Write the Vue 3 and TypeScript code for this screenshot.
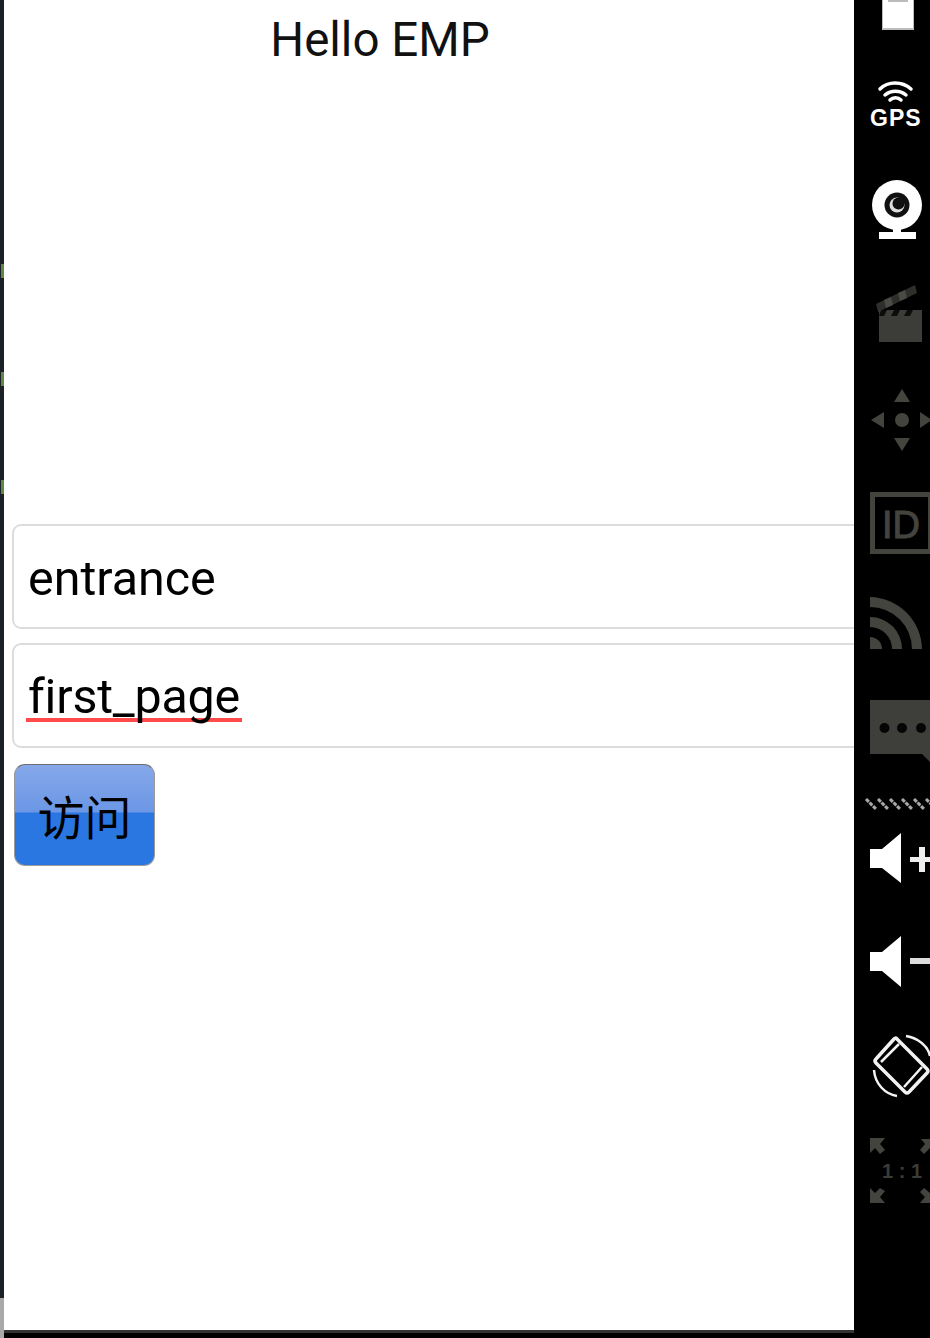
<script setup lang="ts">
import { ref } from 'vue'

const title = ref<string>('Hello EMP')
const moduleName = ref<string>('entrance')
const pageName = ref<string>('first_page')

// hatch strip between the grey tools and the volume keys
const hatches: number[] = [12, 24, 36, 48, 60, 72]
</script>

<template>
  <div class="emulator">
    <div class="edge">
      <i class="tick first"></i>
      <i class="tick"></i>
      <i class="tick"></i>
      <div class="edge-end"></div>
    </div>

    <div class="screen-col">
      <main class="screen">
        <h1 class="title">{{ title }}</h1>
        <div class="field first-field">{{ moduleName }}</div>
        <div class="field second-field"><span class="misspelled">{{ pageName }}</span></div>
        <button class="go" type="button">访问</button>
      </main>
      <div class="screen-bottom"></div>
    </div>

    <aside class="tools">
      <!-- battery -->
      <svg class="tool" width="76" height="30" viewBox="0 0 76 30">
        <rect x="28" y="0" width="32" height="30" fill="#bdbdbd" />
        <rect x="29" y="0" width="30" height="28" fill="#fff" />
        <rect x="34" y="0" width="20" height="2" fill="#bbb" />
      </svg>
      <!-- gps -->
      <svg class="tool gap-50" width="76" height="50" viewBox="0 0 76 50">
        <g fill="none" stroke="#fff" stroke-width="3.5" stroke-linecap="round">
          <path d="M26 9 C34 1 48 1 57 9" />
          <path d="M31 15 C37 10 46 10 52 15" />
          <path d="M36 20 C39 17 44 17 47 20" />
        </g>
        <text x="16" y="46" class="gps">GPS</text>
      </svg>
      <!-- camera -->
      <svg class="tool gap-49" width="76" height="60" viewBox="0 0 76 60">
        <circle cx="43" cy="26" r="25" fill="#fff" />
        <circle cx="43" cy="26" r="12.5" fill="#111" />
        <circle cx="43" cy="26" r="7.500" fill="#ddd" />
        <circle cx="44.500" cy="24.500" r="6" fill="#111" />
        <rect x="39" y="48" width="8" height="6" fill="#fff" />
        <rect x="25" y="53" width="37" height="7" fill="#fff" />
      </svg>
      <!-- clapper -->
      <svg class="tool gap-45" width="76" height="58" viewBox="0 0 76 58">
        <path d="M22 20 L61 1 L63 9 L24 28 Z" fill="#2e2e2b" />
        <path d="M30 16 L37 13 L39 21 L32 24 Z M44 9 L51 6 L53 14 L46 17 Z" fill="#4a4a46" />
        <rect x="25" y="26" width="43" height="32" fill="#3c3c38" />
        <path d="M27 26 L33 26 L30 32 L25 32 Z M40 26 L46 26 L43 32 L37 32 Z M53 26 L59 26 L56 32 L50 32 Z" fill="#0c0c0c" />
      </svg>
      <!-- dpad -->
      <svg class="tool gap-47" width="76" height="64" viewBox="0 0 76 64">
        <g fill="#44443f">
          <path d="M48 0 L56 13 L40 13 Z" />
          <path d="M48 62 L56 49 L40 49 Z" />
          <path d="M17 31 L30 23 L30 39 Z" />
          <path d="M66 23 L78 31 L66 39 Z" />
          <circle cx="48" cy="31" r="7" />
        </g>
      </svg>
      <!-- device id -->
      <svg class="tool gap-39" width="76" height="62" viewBox="0 0 76 62">
        <rect x="18.500" y="2.500" width="58" height="57" fill="none" stroke="#44443f" stroke-width="5" />
        <text x="28" y="46" class="id">ID</text>
      </svg>
      <!-- rss -->
      <svg class="tool gap-40" width="76" height="56" viewBox="0 0 76 56">
        <g fill="#44443f">
          <path d="M16 3 A53 53 0 0 1 68 55 L58 55 A42 42 0 0 0 16 13 Z" />
          <path d="M16 23 A32 32 0 0 1 48 55 L38 55 A22 22 0 0 0 16 33 Z" />
          <path d="M16 43 A12 12 0 0 1 28 55 L16 55 Z" />
        </g>
      </svg>
      <!-- sms -->
      <svg class="tool gap-50" width="76" height="62" viewBox="0 0 76 62">
        <path d="M16 0 H76 V62 L68 54 H16 Z" fill="#3e3e3a" />
        <circle cx="30.500" cy="28" r="5" fill="#050505" />
        <circle cx="48" cy="28" r="5" fill="#050505" />
        <circle cx="67" cy="28" r="5" fill="#050505" />
      </svg>
      <!-- hatch -->
      <svg class="tool gap-36" width="76" height="12" viewBox="0 0 76 12">
        <path v-for="x in hatches" :key="x" :d="`M${x} 1 L${x + 10} 11`" stroke="#a8a8a8" stroke-width="3" stroke-dasharray="4 1" />
      </svg>
      <!-- volume up -->
      <svg class="tool gap-23" width="76" height="52" viewBox="0 0 76 52">
        <path d="M16 16 H28 L47 0 V50 L28 35 H16 Z" fill="#fff" />
        <path d="M56 24 H76 V29 H56 Z M65 14 H71 V39 H65 Z" fill="#eee" />
      </svg>
      <!-- volume down -->
      <svg class="tool gap-51" width="76" height="52" viewBox="0 0 76 52">
        <path d="M16 16 H28 L47 0 V51 L28 35 H16 Z" fill="#fff" />
        <rect x="56" y="22" width="20" height="6" fill="#ddd" />
      </svg>
      <!-- rotate -->
      <svg class="tool gap-46" width="76" height="64" viewBox="0 0 76 64">
        <g fill="none" stroke="#f2f2f2">
          <path d="M43 5 L73 35 Q75 37 73 39 L55 58 Q53 60 51 58 L22 29 Q20 27 22 25 L40 5 Q42 3 43 5 Z" stroke-width="3.500" />
          <path d="M27 28 L45 10 M50 53 L68 33" stroke-width="2.500" />
          <path d="M52 2 C64 4 74 12 76 22" stroke-width="2.500" />
          <path d="M20 36 C21 50 31 60 43 62" stroke-width="2.500" />
        </g>
      </svg>
      <!-- one to one -->
      <svg class="tool gap-40" width="76" height="66" viewBox="0 0 76 66">
        <g fill="#44443f">
          <path d="M16 0 H31 L26 6 L31 12 L26 16 L21 10 L16 15 Z" />
          <path d="M76 1 H67 L71 6 L66 12 L70 16 L76 10 Z" />
          <path d="M16 65 H31 L26 59 L31 53 L26 50 L21 55 L16 50 Z" />
          <path d="M76 65 H66 L71 59 L66 54 L70 50 L76 55 Z" />
        </g>
        <text x="28" y="40" class="ratio">1 : 1</text>
      </svg>
    </aside>
  </div>
</template>

<style scoped>
.emulator {
  display: flex;
  width: 930px;
  height: 1338px;
  overflow: hidden;
  background: #000;
  font-family: Roboto, "Noto Sans CJK SC", sans-serif;
}

/* sliver of the IDE window behind the emulator */
.edge {
  flex: 0 0 4px;
  display: flex;
  flex-direction: column;
  background: #1b2127;
}
.tick {
  display: block;
  flex: 0 0 14px;
  margin-top: 94px;
  background: linear-gradient(90deg, #1b2127 25%, #5c8a45 25%);
}
.tick.first {
  margin-top: 264px;
}
.edge-end {
  height: 40px;
  margin-top: auto;
  background: #a9a9a9;
}

.screen-col {
  flex: 0 0 850px;
  display: flex;
  flex-direction: column;
  overflow: hidden;
}
.screen {
  flex: 1;
  background: #fff;
  padding-top: 14px;
}
.screen-bottom {
  flex: 0 0 8px;
  background: #000;
  border-top: 3px solid #333;
  box-sizing: border-box;
}

.title {
  margin: 0;
  padding-right: 98px;
  font-size: 47.500px;
  line-height: 52px;
  font-weight: 400;
  color: #111;
  text-align: center;
}

.field {
  box-sizing: border-box;
  width: 900px;
  height: 105px;
  margin-left: 8px;
  padding: 0 14px;
  border: 2px solid #dcdcdf;
  border-radius: 9px;
  background: #fff;
  font-size: 48.400px;
  line-height: 106px;
  color: #000;
}
.first-field {
  margin-top: 458px;
}
.second-field {
  margin-top: 14px;
  line-height: 103px;
}
.misspelled {
  display: inline-block;
  margin-left: -2px;
  padding: 0 2px;
  line-height: 58px;
  letter-spacing: -0.200px;
  background: linear-gradient(#ff4a4a, #ff4a4a) left 50px / 100% 4px no-repeat;
}

.go {
  display: block;
  box-sizing: border-box;
  width: 141px;
  height: 102px;
  margin: 16px 0 0 10px;
  padding: 0;
  border: 1px solid #9a9a9a;
  border-top-color: #6f6f6f;
  border-radius: 11px;
  background: linear-gradient(#86a8ea 0, #6b97e5 47%, #2b77e2 48%, #2b77e2 100%);
  font-family: "Noto Sans CJK SC", sans-serif;
  font-size: 47px;
  line-height: 88px;
  color: #000;
}

.tools {
  flex: 0 0 76px;
  display: flex;
  flex-direction: column;
  background: #000;
}
.tool {
  display: block;
  flex: 0 0 auto;
}
.gap-23 { margin-top: 23px; }
.gap-36 { margin-top: 36px; }
.gap-39 { margin-top: 39px; }
.gap-40 { margin-top: 40px; }
.gap-45 { margin-top: 45px; }
.gap-46 { margin-top: 46px; }
.gap-47 { margin-top: 47px; }
.gap-49 { margin-top: 49px; }
.gap-50 { margin-top: 50px; }
.gap-51 { margin-top: 51px; }

.gps {
  font-family: "Liberation Sans", sans-serif;
  font-size: 23px;
  font-weight: 700;
  letter-spacing: 1px;
  fill: #fff;
}
.id {
  font-family: "Liberation Sans", sans-serif;
  font-size: 38px;
  fill: #44443f;
  stroke: #44443f;
  stroke-width: 1px;
}
.ratio {
  font-family: "Liberation Sans", sans-serif;
  font-size: 20px;
  font-weight: 700;
  fill: #3c3c38;
}
</style>
